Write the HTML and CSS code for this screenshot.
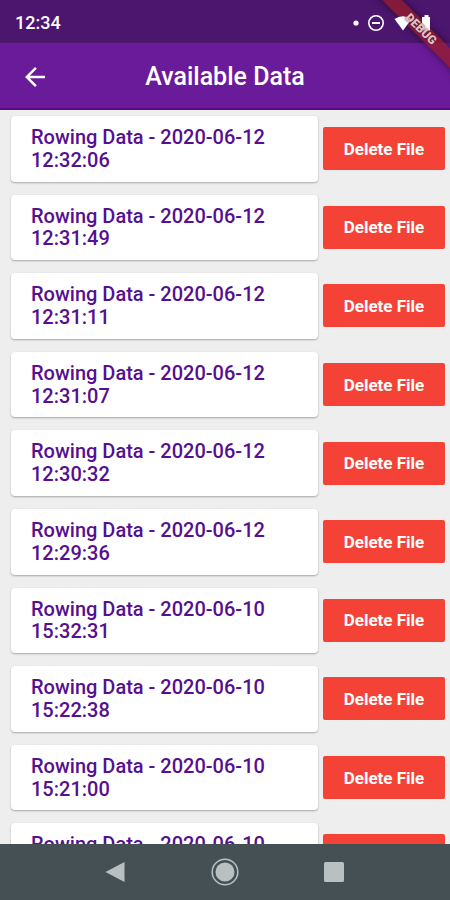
FILE: index.html
```html
<!DOCTYPE html>
<html lang="en">
<head>
<meta charset="utf-8">
<meta name="viewport" content="width=device-width, initial-scale=1">
<title>Available Data</title>
<link rel="stylesheet" href="styles.css">
</head>
<body>
<div class="status">
  <time class="clock">12:34</time>
  <svg class="status-icons" width="80" height="20" viewBox="0 0 80 20" aria-hidden="true">
    <circle cx="6" cy="10" r="2.6" fill="#fff"/>
    <circle cx="26" cy="10" r="7.200" fill="none" stroke="#fff" stroke-width="1.600"/>
    <path d="M22 10h8" stroke="#fff" stroke-width="2"/>
    <path d="M44.500 6Q53 .5 61.500 6L53 17.500z" fill="#fff"/>
    <path d="M74.500 2h4v2h2.500v13.500h-9V4h2.500z" fill="#fff"/>
  </svg>
</div>
<header class="appbar">
  <button class="back" type="button" aria-label="Back">
    <svg width="30" height="30" viewBox="0 0 24 24" aria-hidden="true"><path d="M20 11H7.830l5.590-5.590L12 4l-8 8 8 8 1.410-1.410L7.830 13H20z" fill="#fff"/></svg>
  </button>
  <h1 class="title">Available Data</h1>
</header>
<main class="content">
  <ul class="list">
    <li class="row"><a class="card" href="#">Rowing Data - 2020-06-12 12:32:06</a><button class="delete" type="button">Delete File</button></li>
    <li class="row"><a class="card" href="#">Rowing Data - 2020-06-12 12:31:49</a><button class="delete" type="button">Delete File</button></li>
    <li class="row"><a class="card" href="#">Rowing Data - 2020-06-12 12:31:11</a><button class="delete" type="button">Delete File</button></li>
    <li class="row"><a class="card" href="#">Rowing Data - 2020-06-12 12:31:07</a><button class="delete" type="button">Delete File</button></li>
    <li class="row"><a class="card" href="#">Rowing Data - 2020-06-12 12:30:32</a><button class="delete" type="button">Delete File</button></li>
    <li class="row"><a class="card" href="#">Rowing Data - 2020-06-12 12:29:36</a><button class="delete" type="button">Delete File</button></li>
    <li class="row"><a class="card" href="#">Rowing Data - 2020-06-10 15:32:31</a><button class="delete" type="button">Delete File</button></li>
    <li class="row"><a class="card" href="#">Rowing Data - 2020-06-10 15:22:38</a><button class="delete" type="button">Delete File</button></li>
    <li class="row"><a class="card" href="#">Rowing Data - 2020-06-10 15:21:00</a><button class="delete" type="button">Delete File</button></li>
    <li class="row"><a class="card" href="#">Rowing Data - 2020-06-10</a><button class="delete" type="button" aria-label="Delete File"></button></li>
  </ul>
</main>
<nav class="navbar" aria-label="System">
  <button class="nav-button" type="button" aria-label="Back"><svg width="30" height="30" viewBox="0 0 30 30" aria-hidden="true"><path d="M4.500 15L23.500 5v20z" fill="#b9c0c2"/></svg></button>
  <button class="nav-button" type="button" aria-label="Home"><svg width="30" height="30" viewBox="0 0 30 30" aria-hidden="true"><circle cx="15" cy="15" r="12.800" fill="none" stroke="#b9c0c2" stroke-width="1.500"/><circle cx="15" cy="15" r="9.500" fill="#b9c0c2"/></svg></button>
  <button class="nav-button" type="button" aria-label="Overview"><svg width="30" height="30" viewBox="0 0 30 30" aria-hidden="true"><rect x="5" y="5" width="20" height="20" rx="1.500" fill="#b9c0c2"/></svg></button>
</nav>
<div class="corner corner-band"><div class="ribbon band"></div></div>
<div class="corner corner-label"><div class="ribbon label">DEBUG</div></div>
</body>
</html>
```
FILE: styles.css
```css
* {
  box-sizing: border-box;
}

body {
  margin: 0;
  height: 100vh;
  display: flex;
  flex-direction: column;
  position: relative;
  overflow: hidden;
  background: #eeeeee;
  font-family: Roboto, "Liberation Sans", sans-serif;
}

button {
  border: 0;
  padding: 0;
  font: inherit;
  background: none;
}

svg {
  display: block;
}

.status {
  display: flex;
  flex: none;
  align-items: center;
  justify-content: space-between;
  height: 43px;
  padding: 2px 20px 0 15px;
  background: #4c166f;
  color: #fff;
}

.clock {
  font-size: 18px;
  font-weight: 500;
}

.status-icons {
  position: relative;
  z-index: 2;
}

.appbar {
  display: grid;
  grid-template-columns: 32px 1fr 32px;
  flex: none;
  align-items: center;
  height: 67px;
  padding: 2px 20px 0;
  background: #6a1b9a;
  border-bottom: 2px solid #560c88;
  color: #fff;
}

.title {
  margin: 0;
  font-size: 25px;
  font-weight: 500;
  text-align: center;
}

.content {
  flex: 1;
  min-height: 0;
  overflow: hidden;
}

.list {
  margin: 0;
  padding: 0;
  list-style: none;
}

.row {
  display: flex;
  align-items: center;
  gap: 5px;
  min-height: 78px;
  padding: 6px 5px 7px 11px;
}

.card {
  flex: 1;
  align-self: stretch;
  padding: 10px 20px;
  border-radius: 4px;
  background: #fff;
  box-shadow: 0 1px 2px rgba(0, 0, 0, 0.3);
  color: #560f91;
  font-size: 20px;
  font-weight: 500;
  line-height: 1.14;
  text-decoration: none;
}

.delete {
  flex: none;
  width: 122px;
  height: 43px;
  border-radius: 2px;
  background: #f44336;
  color: #fff;
  font-size: 17px;
  font-weight: 700;
}

.navbar {
  display: flex;
  flex: none;
  justify-content: center;
  gap: 79px;
  height: 56px;
  background: #455055;
}

.nav-button {
  display: grid;
  place-items: center;
}

.corner {
  position: absolute;
  top: 0;
  right: 0;
  width: 100px;
  height: 100px;
  overflow: hidden;
  pointer-events: none;
}

.corner-band {
  z-index: 1;
}

.corner-label {
  z-index: 3;
}

.ribbon {
  position: absolute;
  top: 22px;
  right: -41px;
  width: 140px;
  height: 14px;
  transform: rotate(45deg);
}

.band {
  background: rgba(157, 27, 35, 0.7);
  box-shadow: 0 0 8px rgba(0, 0, 0, 0.5);
}

.label {
  color: #ddc3c8;
  font-size: 12px;
  font-weight: 900;
  line-height: 14px;
  text-align: center;
  text-shadow: 0 0 2px #5c1428;
}
```
